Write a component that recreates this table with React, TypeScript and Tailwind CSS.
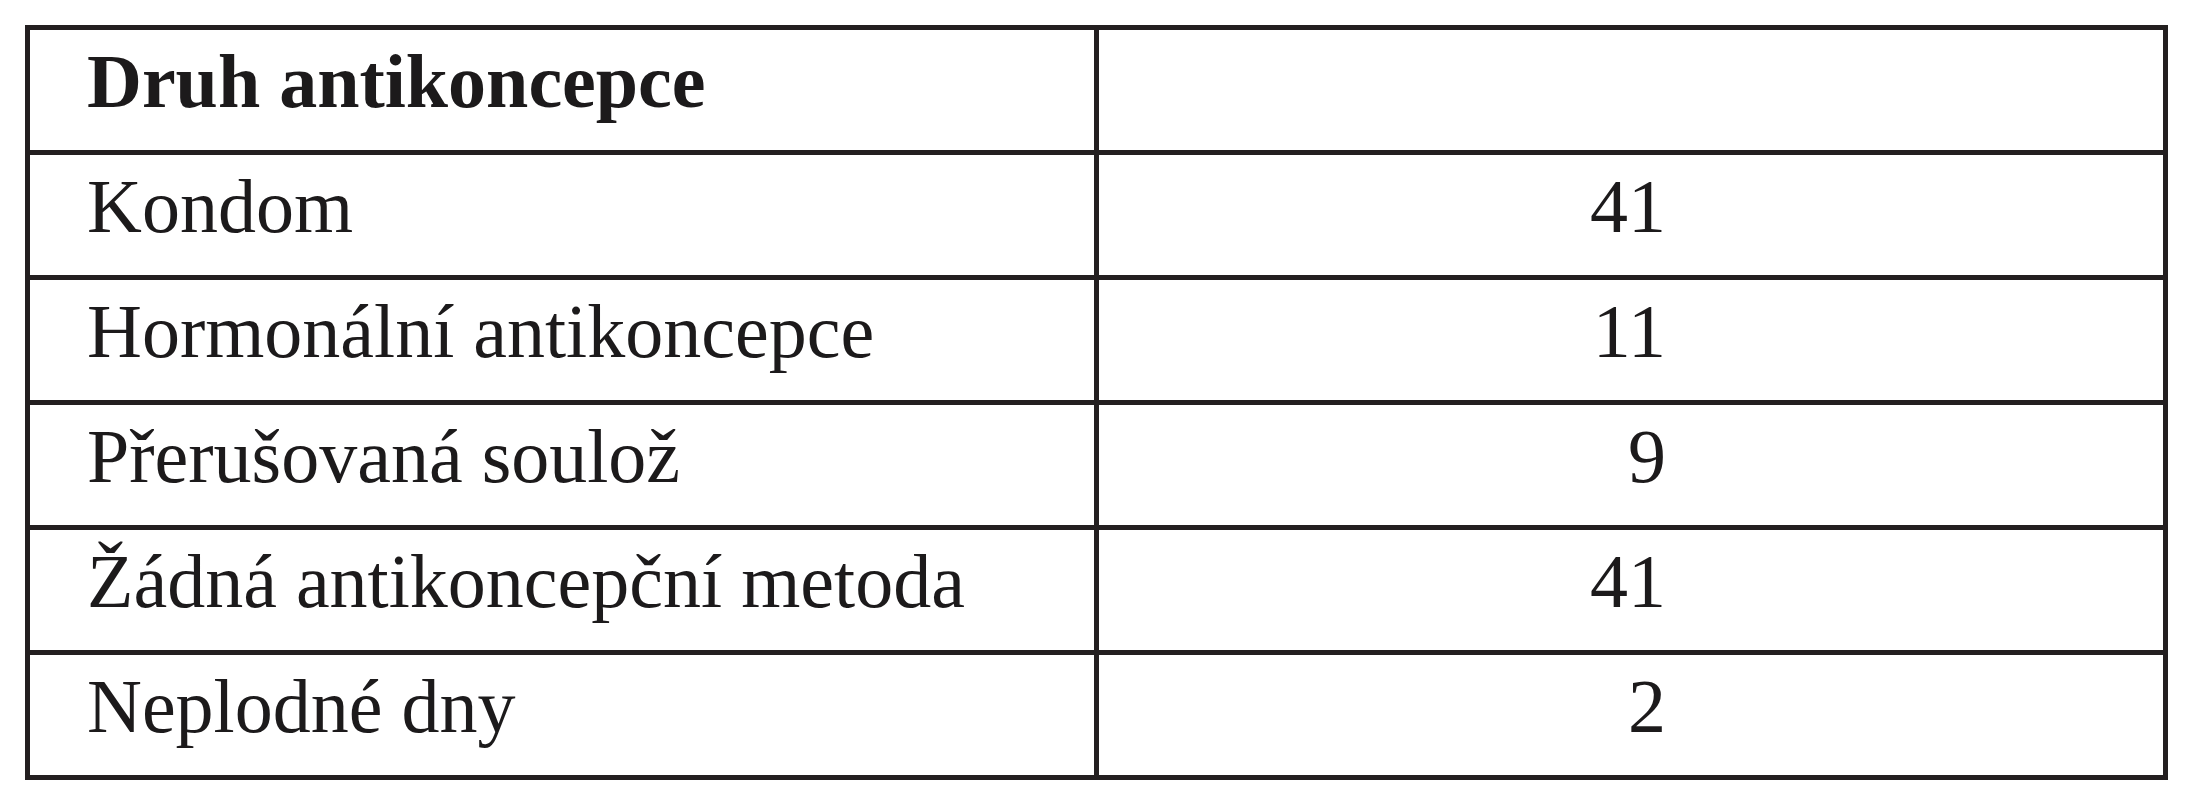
import React from 'react';

const rows = [
  { label: 'Kondom', value: '41' },
  { label: 'Hormonální antikoncepce', value: '11' },
  { label: 'Přerušovaná soulož', value: '9' },
  { label: 'Žádná antikoncepční metoda', value: '41' },
  { label: 'Neplodné dny', value: '2' },
];

const App: React.FC = () => {
  return (
    <div className="w-[2194px] h-[800px] bg-white pt-[25px] pl-[25px] font-['Liberation_Serif','Times_New_Roman',serif] text-[#1c1a1b]">
      <div className="w-[2143px] border-[5px] border-[#231f20] flex flex-col">
        <div className="flex h-[125px] border-b-[5px] border-[#231f20]">
          <div className="w-[1069px] border-r-[5px] border-[#231f20] pl-[57px] pt-[13px] text-[76px] leading-none font-bold">
            Druh antikoncepce
          </div>
          <div className="flex-1" />
        </div>

        {rows.map((row, i) => {
          const isLast = i === rows.length - 1;
          return (
            <div
              key={row.label}
              className={`flex ${isLast ? 'h-[120px]' : 'h-[125px] border-b-[5px] border-[#231f20]'}`}
            >
              <div className="w-[1069px] border-r-[5px] border-[#231f20] pl-[57px] pt-[13px] text-[76px] leading-none">
                {row.label}
              </div>
              <div className="flex-1 text-right pr-[497px] pt-[13px] text-[76px] leading-none">
                {row.value}
              </div>
            </div>
          );
        })}
      </div>
    </div>
  );
};

export default App;
